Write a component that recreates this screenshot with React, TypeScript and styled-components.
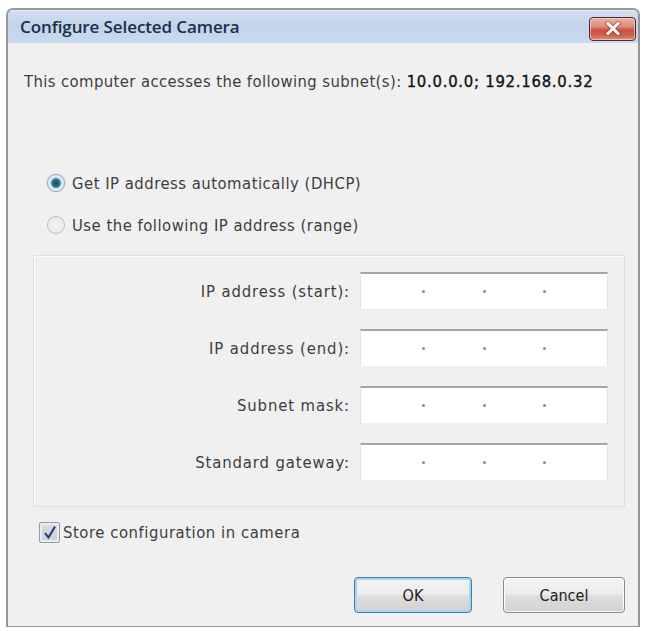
import React from "react";
import styled, { createGlobalStyle } from "styled-components";

const GlobalStyle = createGlobalStyle`
  html, body { margin: 0; padding: 0; background: #ffffff; }
  body {
    font-family: "DejaVu Sans Condensed", "DejaVu Sans", sans-serif;
    font-stretch: condensed;
    color: #333;
  }
  * { box-sizing: border-box; }
`;

const Window = styled.div`
  width: 634px;
  height: 619px;
  margin: 8px 0 0 6px;
  border: 2px solid #979797;
  border-bottom-width: 1px;
  border-radius: 7px 7px 0 0;
  display: flex;
  flex-direction: column;
  overflow: hidden;
  background: #f0f0f0;
`;

const TitleBar = styled.div`
  height: 33px;
  flex: none;
  display: flex;
  align-items: center;
  justify-content: space-between;
  padding: 0 2px 0 12px;
  background: linear-gradient(180deg, #d3dfef 0%, #c3d4ea 45%, #c9d9ee 100%);
  box-shadow: inset 0 1px 0 #e6eef8;
`;

const Title = styled.span`
  font-family: "Open Sans", "Noto Sans", sans-serif;
  font-stretch: normal;
  font-size: 17px;
  font-weight: 600;
  color: #1d2d4a;
  letter-spacing: -0.1px;
`;

const CloseButton = styled.div`
  width: 47px;
  height: 24px;
  margin-top: 4px;
  border: 1px solid #4a2a2a;
  border-radius: 4px;
  display: flex;
  align-items: center;
  justify-content: center;
  background: linear-gradient(
    180deg,
    #eab3a6 0%,
    #dc8a78 40%,
    #c9513e 55%,
    #cf6450 80%,
    #e0917c 100%
  );
  box-shadow: inset 0 0 0 1px rgba(255, 220, 210, 0.6);
`;

const Body = styled.div`
  flex: 1;
  display: flex;
  flex-direction: column;
  padding: 0 13px 13px 0;
  font-size: 16.5px;
  letter-spacing: 0.4px;
  color: #3d3d3d;
`;

const SubnetText = styled.div`
  margin: 29px 0 0 16px;
  line-height: 20px;
  white-space: nowrap;
`;

const SubnetValue = styled.span`
  color: #111;
  -webkit-text-stroke: 0.35px #111;
  letter-spacing: 0.75px;
`;

const RadioRow = styled.label<{ $first?: boolean }>`
  display: flex;
  align-items: center;
  gap: 7px;
  height: 20px;
  margin: ${(p) => (p.$first ? "81px" : "22px")} 0 0 39px;
  white-space: nowrap;
  letter-spacing: 0.5px;
`;

const RadioCircle = styled.span<{ $checked?: boolean }>`
  width: 18px;
  height: 18px;
  border-radius: 50%;
  flex: none;
  border: 1px solid ${(p) => (p.$checked ? "#8aa6c2" : "#b9b9b9")};
  background: ${(p) =>
    p.$checked
      ? "radial-gradient(circle at 50% 50%, #1c4f6b 0%, #2a6a88 30%, #7fb0cc 44%, #e4eef6 52%, #f6f9fc 100%)"
      : "radial-gradient(circle at 50% 50%, #f4f4f4 0%, #ececec 55%, #fafafa 100%)"};
  box-shadow: ${(p) => (p.$checked ? "0 0 2px #a9c4de" : "none")};
`;

const Panel = styled.div`
  margin: 20px 0 0 25px;
  padding: 16px 16px 25px 16px;
  border: 1px solid #e0e0e0;
  box-shadow: inset 1px 1px 0 #fbfbfb;
  display: grid;
  grid-template-columns: 1fr 248px;
  column-gap: 10px;
  row-gap: 19px;
  align-items: center;
`;

const FieldLabel = styled.span`
  text-align: right;
  white-space: nowrap;
  letter-spacing: 0.9px;
`;

const IpField = styled.div`
  height: 38px;
  background: #ffffff;
  border-top: 2px solid #a6a6a6;
  border-left: 1px solid #e4e4e4;
  border-right: 1px solid #e4e4e4;
  border-bottom: 1px solid #eeeeee;
  display: flex;
  align-items: center;
  padding: 0 4px;
`;

const Octet = styled.span`
  flex: 1;
`;

const Dot = styled.span`
  width: 3px;
  height: 3px;
  border-radius: 50%;
  background: #8a8a8a;
  flex: none;
`;

const CheckRow = styled.label`
  display: flex;
  align-items: center;
  gap: 3px;
  height: 22px;
  margin: 14px 0 0 31px;
  letter-spacing: 0.55px;
`;

const CheckBox = styled.span`
  width: 21px;
  height: 21px;
  flex: none;
  border: 1px solid #9a9a9a;
  border-radius: 2px;
  background: linear-gradient(180deg, #d9dee6 0%, #c9cfd9 100%);
  box-shadow: inset 0 0 0 2px #e8ebf0;
  display: flex;
  align-items: center;
  justify-content: center;
`;

const ButtonBar = styled.div`
  margin-top: auto;
  display: flex;
  justify-content: flex-end;
  gap: 31px;
`;

const DialogButton = styled.button<{ $default?: boolean }>`
  width: ${(p) => (p.$default ? "118px" : "122px")};
  height: 36px;
  font-family: inherit;
  font-stretch: condensed;
  font-size: 16px;
  color: #222;
  border-radius: 4px;
  border: 1px solid ${(p) => (p.$default ? "#3d7ea8" : "#8a8a8a")};
  background: linear-gradient(
    180deg,
    #f4f4f4 0%,
    #ececec 48%,
    #dedede 52%,
    #d2d2d2 100%
  );
  box-shadow: ${(p) =>
    p.$default ? "inset 0 0 0 2px #a8d8ef" : "inset 0 0 0 1px #fbfbfb"};
  padding: 0;
`;

const IP_FIELDS = [
  "IP address (start):",
  "IP address (end):",
  "Subnet mask:",
  "Standard gateway:",
];

const App: React.FC = () => {
  return (
    <>
      <GlobalStyle />
      <Window>
        <TitleBar>
          <Title>Configure Selected Camera</Title>
          <CloseButton>
            <svg width="18" height="15" viewBox="0 0 18 15">
              <path
                d="M4 2.5 L14 12.5 M14 2.5 L4 12.5"
                stroke="#6b2a20"
                strokeWidth="5"
                strokeLinecap="square"
                opacity="0.45"
              />
              <path
                d="M4 2.5 L14 12.5 M14 2.5 L4 12.5"
                stroke="#ffffff"
                strokeWidth="3"
                strokeLinecap="square"
              />
            </svg>
          </CloseButton>
        </TitleBar>
        <Body>
          <SubnetText>
            This computer accesses the following subnet(s):{" "}
            <SubnetValue>10.0.0.0; 192.168.0.32</SubnetValue>
          </SubnetText>
          <RadioRow $first>
            <RadioCircle $checked />
            Get IP address automatically (DHCP)
          </RadioRow>
          <RadioRow>
            <RadioCircle />
            Use the following IP address (range)
          </RadioRow>
          <Panel>
            {IP_FIELDS.map((label) => (
              <React.Fragment key={label}>
                <FieldLabel>{label}</FieldLabel>
                <IpField>
                  <Octet />
                  <Dot />
                  <Octet />
                  <Dot />
                  <Octet />
                  <Dot />
                  <Octet />
                </IpField>
              </React.Fragment>
            ))}
          </Panel>
          <CheckRow>
            <CheckBox>
              <svg width="14" height="15" viewBox="0 0 14 15">
                <path
                  d="M2 8 L5.5 12.5 L12 1.5"
                  stroke="#26357a"
                  strokeWidth="2"
                  fill="none"
                />
              </svg>
            </CheckBox>
            Store configuration in camera
          </CheckRow>
          <ButtonBar>
            <DialogButton $default>OK</DialogButton>
            <DialogButton>Cancel</DialogButton>
          </ButtonBar>
        </Body>
      </Window>
    </>
  );
};

export default App;
